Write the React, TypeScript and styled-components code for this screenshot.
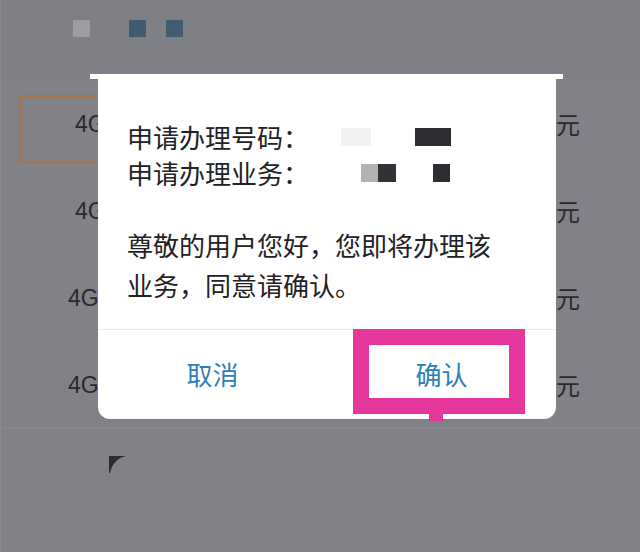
import React from "react";
import styled, { createGlobalStyle } from "styled-components";

const GlobalStyle = createGlobalStyle`
  html, body {
    margin: 0;
    padding: 0;
    background: #818187;
  }
  * {
    box-sizing: border-box;
  }
`;

// only the edges of each row show around the dialog
const plans = [
  { id: 1, indent: 54, price: "元", selected: true },
  { id: 2, indent: 54, price: "元", selected: false },
  { id: 3, indent: 47, price: "8元", selected: false },
  { id: 4, indent: 47, price: "8元", selected: false },
];

const App: React.FC = () => {
  return (
    <>
      <GlobalStyle />
      <Screen>
        <Header>
          <Dot tone="#9c9da3" />
          <Dot tone="#3f5a71" />
          <Dot tone="#415b70" />
        </Header>
        <PlanList>
          {plans.map((plan) => (
            <PlanRow key={plan.id}>
              <PlanCell selected={plan.selected} indent={plan.indent}>
                4G
              </PlanCell>
              <Price>{plan.price}</Price>
            </PlanRow>
          ))}
        </PlanList>
        <Footer>
          <svg width="17" height="17" viewBox="0 0 17 17">
            <path d="M0 0 H17 C8 2 3 8 1 17 H0 Z" fill="#2b2b30" />
          </svg>
        </Footer>

        {/* confirm dialog over the list */}
        <Dialog>
          <DialogBody>
            <InfoLine>
              申请办理号码：
              <Mask tone="#f1f1f3" w={30} gap={32} />
              <Mask tone="#2e2d31" w={36} gap={44} />
            </InfoLine>
            <InfoLine>
              申请办理业务：
              <Mask tone="#b2b2b4" w={17} gap={52} />
              <Mask tone="#333236" w={18} gap={0} />
              <Mask tone="#2e2d31" w={17} gap={37} />
            </InfoLine>
            <Message>尊敬的用户您好，您即将办理该业务，同意请确认。</Message>
          </DialogBody>
          <Actions>
            <ActionButton>取消</ActionButton>
            <ActionButton>
              确认
              <Highlight />
            </ActionButton>
          </Actions>
        </Dialog>
      </Screen>
    </>
  );
};

export default App;

const Screen = styled.div`
  position: relative;
  width: 640px;
  height: 552px;
  overflow: hidden;
  background: #818187;
  border-left: 1px solid #8a8a90;
  font-family: "Liberation Sans", "Noto Sans CJK SC", sans-serif;
`;

const Header = styled.div`
  height: 80px;
  display: flex;
  align-items: flex-start;
  padding: 20px 0 0 72px;
  gap: 39px;
  background: #7f8085;

  & > span:last-child {
    margin-left: -19px;
  }
`;

const Dot = styled.span<{ tone: string }>`
  display: block;
  width: 17px;
  height: 17px;
  background: ${(p) => p.tone};
`;

const PlanList = styled.div`
  display: flex;
  flex-direction: column;
`;

const PlanRow = styled.div`
  height: 87px;
  display: flex;
  align-items: center;
  justify-content: space-between;
  padding: 0 60px 0 18px;
  border-bottom: 1px solid rgba(255, 255, 255, 0.04);
`;

const PlanCell = styled.div<{ selected: boolean; indent: number }>`
  width: 260px;
  height: 68px;
  display: flex;
  align-items: center;
  padding-left: ${(p) => p.indent}px;
  margin-top: 14px;
  margin-bottom: 3px;
  border: 2px solid ${(p) => (p.selected ? "#a67346" : "transparent")};
  font-size: 23px;
  color: #2a2a2e;
  white-space: nowrap;

  & {
    line-height: 1;
    padding-bottom: 8px;
  }
`;

const Price = styled.span`
  font-size: 24px;
  color: #2a2a2e;
`;

const Footer = styled.div`
  padding: 27px 0 0 108px;
  border-top: 1px solid rgba(255, 255, 255, 0.05);
`;

const Dialog = styled.div`
  position: absolute;
  left: 97px;
  top: 75px;
  width: 458px;
  height: 344px;
  display: flex;
  flex-direction: column;
  background: #ffffff;
  border-radius: 0 0 12px 12px;
  font-family: "Noto Sans CJK SC", "Liberation Sans", sans-serif;

  &::before {
    content: "";
    position: absolute;
    top: -1px;
    left: -8px;
    right: -7px;
    height: 5px;
    background: #ffffff;
  }
`;

const DialogBody = styled.div`
  height: 254px;
  padding: 44px 30px 0 29px;
  color: #222226;
`;

const InfoLine = styled.div`
  font-size: 26px;
  line-height: 36px;
  white-space: nowrap;
  display: flex;
  align-items: center;
`;

const Mask = styled.span<{ tone: string; w: number; gap: number }>`
  display: inline-block;
  width: ${(p) => p.w}px;
  height: 18px;
  margin-left: ${(p) => p.gap}px;
  background: ${(p) => p.tone};
`;

const Message = styled.p`
  margin: 34px 0 0 0;
  width: 385px;
  font-size: 26px;
  line-height: 40px;
`;

const Actions = styled.div`
  flex: 1;
  display: grid;
  grid-template-columns: 1fr 1fr;
  border-top: 1px solid #ebebed;
`;

const ActionButton = styled.button`
  position: relative;
  background: none;
  border: none;
  padding: 0 0 2px 0;
  font-family: "Noto Sans CJK SC", sans-serif;
  font-size: 26px;
  color: #2f80b8;
  cursor: pointer;
`;

const Highlight = styled.span`
  position: absolute;
  left: 26px;
  top: -1px;
  width: 172px;
  height: 85px;
  border: 16px solid #e5379b;

  &::after {
    content: "";
    position: absolute;
    left: 60px;
    bottom: -23px;
    width: 14px;
    height: 7px;
    background: #e5379b;
  }
`;
